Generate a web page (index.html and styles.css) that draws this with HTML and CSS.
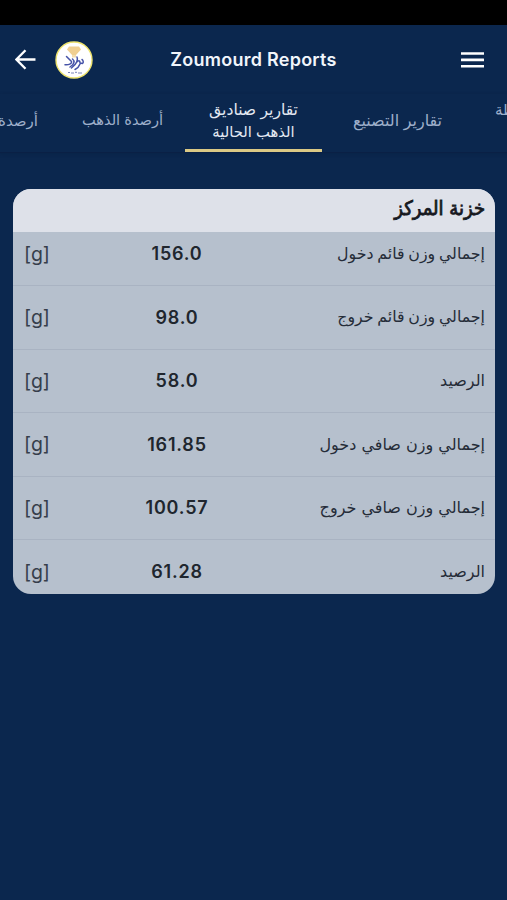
FILE: index.html
```html
<!DOCTYPE html>
<html lang="ar">
<head>
<meta charset="utf-8">
<title>Zoumourd Reports</title>
<link rel="stylesheet" href="styles.css">
</head>
<body>
<div class="status"></div>
<header class="bar">
  <svg class="back" viewBox="0 0 20 20"><path d="M19.500 10H1.500M10 1.200 1.300 10l8.700 8.800"/></svg>
  <svg class="logo" viewBox="0 0 38 38">
    <circle cx="19" cy="19" r="18" fill="#fff" stroke="#eee36e" stroke-width="1.400"/>
    <path d="M14 5.500h10l2 3-5.500 6h-3l-5.500-6z" fill="#f0cf91"/>
    <path d="M17 14h4v2.500h-4z" fill="#f3dcae"/>
    <g fill="none" stroke="#4653a8" stroke-width="1.500" stroke-linecap="round" stroke-linejoin="round">
      <path d="M11.500 15.500l5 5c.6 2.500-3 3.500-6.500 3.200"/>
      <path d="M17.500 18c2.500 2 2 5-2.500 8M22 16c1.500 3 .5 6-5.500 11M21 22c2-3 4-3 4 0l2.500.5c1.500-1 .5-3.500-.5-4M25 23c-1 3-3 4.500-5 5.500"/>
    </g>
    <path d="M13 31.500h2m1 .5h3m1-.7h2m1 .7h4" stroke="#7c86b8" stroke-width="1" fill="none"/>
  </svg>
  <h1 class="title">Zoumourd Reports</h1>
  <svg class="menu" viewBox="0 0 23 16"><path d="M.5 1.500h22M.5 7.900h22M.5 14.300h22"/></svg>
</header>
<nav class="tabs" dir="rtl">
  <div class="tab tab-first"><span>المرتبطة</span><span>&nbsp;</span></div>
  <div class="tab tab-make">تقارير التصنيع</div>
  <div class="tab tab-active"><span>تقارير صناديق</span><span class="second">الذهب الحالية</span></div>
  <div class="tab tab-gold">أرصدة الذهب</div>
  <div class="tab tab-last">أرصدة</div>
</nav>
<main class="card" dir="rtl">
  <h2 class="head">خزنة المركز</h2>
  <div class="rows">
    <div class="row"><span class="label narrow">إجمالي وزن قائم دخول</span><b>156.0</b><span class="unit" dir="ltr">[g]</span></div>
    <div class="row"><span class="label narrow">إجمالي وزن قائم خروج</span><b>98.0</b><span class="unit" dir="ltr">[g]</span></div>
    <div class="row"><span class="label">الرصيد</span><b>58.0</b><span class="unit" dir="ltr">[g]</span></div>
    <div class="row"><span class="label wide">إجمالي وزن صافي دخول</span><b>161.85</b><span class="unit" dir="ltr">[g]</span></div>
    <div class="row"><span class="label wide">إجمالي وزن صافي خروج</span><b>100.57</b><span class="unit" dir="ltr">[g]</span></div>
    <div class="row"><span class="label">الرصيد</span><b>61.28</b><span class="unit" dir="ltr">[g]</span></div>
  </div>
</main>
</body>
</html>
```
FILE: styles.css
```css
* { box-sizing: border-box; }
body {
  margin: 0;
  height: 900px;
  overflow: hidden;
  background: #0b274e;
  font-family: Inter, "DejaVu Sans", sans-serif;
}
.status { height: 25px; background: #000; }
.bar {
  height: 69px;
  display: grid;
  grid-template-columns: 41px 67px 1fr 123px;
  align-items: center;
  padding-left: 15px;
}
.back { width: 21px; height: 21px; fill: none; stroke: #fff; stroke-width: 2.3; }
.logo { width: 38px; height: 38px; margin-left: -1px; }
.title {
  margin: 0;
  text-align: center;
  color: #f1f5fb;
  font-size: 18px;
  font-weight: 600;
  letter-spacing: .25px;
  white-space: nowrap;
}
.menu { width: 23px; height: 16px; margin-left: 77px; margin-top: 1px; fill: none; stroke: #fff; stroke-width: 2.6; stroke-linecap: round; }
.tabs {
  height: 59px;
  display: grid;
  grid-template-columns: 32px 153px 137px 125px 60px;
  border-bottom: 1px solid #0a2045;
  box-shadow: 0 1px 3px #08204088;
}
.tab {
  display: flex;
  flex-direction: column;
  align-items: center;
  justify-content: center;
  overflow: hidden;
  padding-bottom: 5px;
  color: #9eafca;
  font-size: 15px;
  line-height: 23px;
  white-space: nowrap;
}
.tab-first { align-items: flex-end; padding-left: 20px; }
.tab-make { font-size: 16px; padding-right: 2px; }
.tab-active { color: #e3e9f3; font-size: 15.6px; border-bottom: 3px solid #dbc985; padding-bottom: 2px; }
.second { font-size: 14.800px; }
.tab-gold { font-size: 14.600px; }
.tab-last { align-items: flex-start; padding-right: 22px; }
.card {
  width: 482px;
  height: 404.500px;
  margin: 36px 0 0 13px;
  overflow: hidden;
  border-radius: 18px;
  background: #b6c0cd;
}
.head {
  position: relative;
  height: 43px;
  margin: 0;
  padding: 0 10px;
  background: #dee1e9;
  color: #17191f;
  font-size: 20px;
  line-height: 39px;
  font-family: "DejaVu Sans Condensed", "DejaVu Sans", sans-serif;
  font-stretch: condensed;
  font-weight: 400;
  -webkit-text-stroke: .8px #17191f;
}
.rows { margin-top: -9.500px; }
.row {
  height: 63.500px;
  display: grid;
  grid-template-columns: 221px 174px 1fr;
  align-items: center;
  padding: 0 10px 0 11px;
  border-bottom: 1px solid #a9b3c2;
  color: #252c38;
  font-size: 19px;
}
.row:last-child { border-bottom: 0; }
.label { padding-bottom: 1px; font-size: 16px; white-space: nowrap; }
.narrow { font-size: 15.800px; word-spacing: -.7px; }
.wide { word-spacing: .6px; }
.row b { color: #20262e; text-align: center; font-weight: 600; font-size: 18px; letter-spacing: .8px; }
.unit { color: #363e4b; text-align: left; font-size: 19.500px; }
```
